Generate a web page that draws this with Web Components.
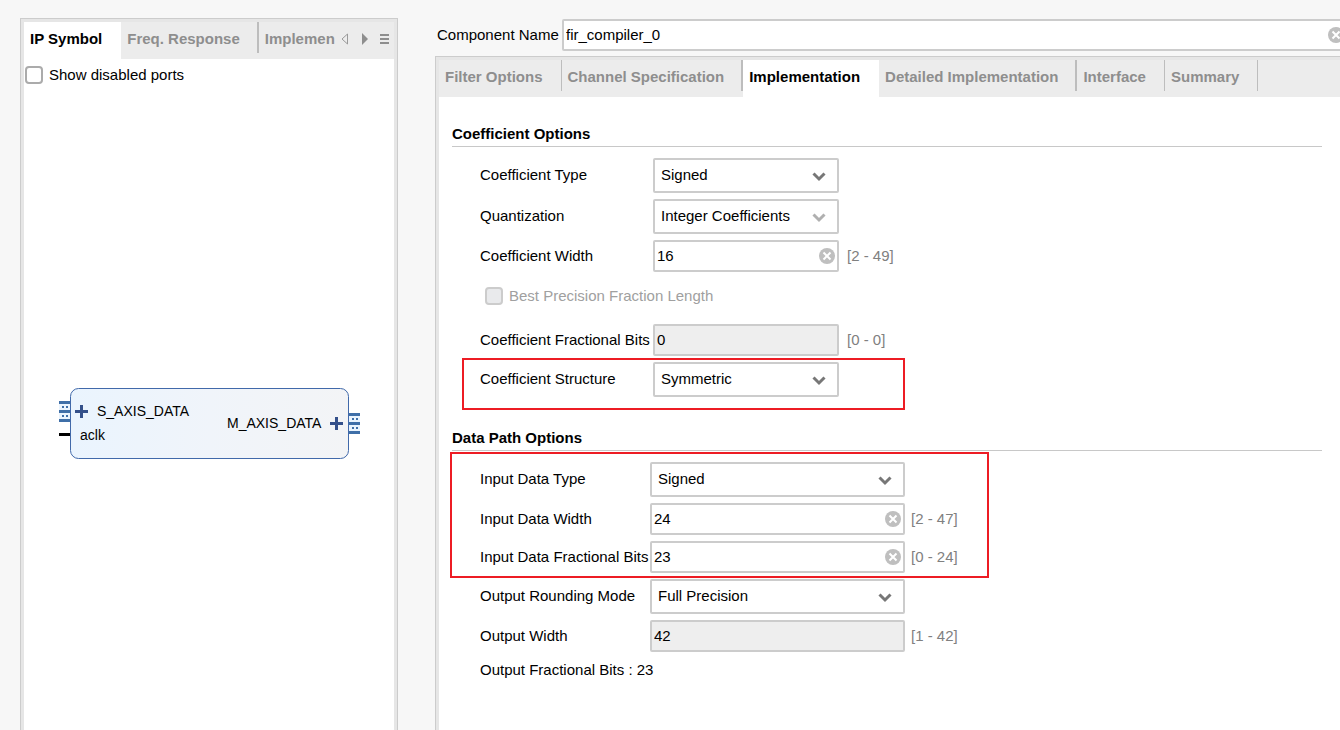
<!DOCTYPE html>
<html lang="en">
<head>
<meta charset="utf-8">
<title>FIR Compiler</title>
<style>
  html, body { height: 100%; }
  body {
    margin: 0;
    background: #f7f7f7;
    color: #000;
    font: 15px/20px "Liberation Sans", Arial, sans-serif;
  }
</style>
</head>
<body>
<fir-wizard></fir-wizard>

<template id="fir-wizard">
  <style>
    :host { display: flex; gap: 37px; min-height: 100vh; box-sizing: border-box; padding: 18px 0 0 20px; overflow: hidden; }
    .side { flex: 0 0 378px; min-width: 0; display: flex; }
    .side tab-panel { flex: 1; min-width: 0; }
    main { flex: 1; min-width: 0; margin-right: -8px; display: flex; flex-direction: column; gap: 5px; }
    main tab-panel { flex: 1; }
    .ports { padding: 6px 0 0 1px; }
    .canvas { padding: 303px 0 0 35px; }
    .form { padding: 27px 22px 24px 13px; display: grid; gap: 31px; }
    .coef { --label: 173px; --field: 186px; --hint-gap: 8px; }
    .data { --label: 170px; --field: 255px; --hint-gap: 6px; }
    .note { display: flex; align-items: center; height: 24px; }
  </style>
  <aside class="side">
    <tab-panel>
      <tab-item slot="tabs" active>IP Symbol</tab-item>
      <tab-item slot="tabs" thick>Freq. Response</tab-item>
      <tab-item slot="tabs" cut>Implemen</tab-item>
      <tab-scroller slot="tools"></tab-scroller>
      <div class="ports"><check-field label="Show disabled ports"></check-field></div>
      <div class="canvas"><ip-symbol></ip-symbol></div>
    </tab-panel>
  </aside>
  <main>
    <name-field label="Component Name" value="fir_compiler_0"></name-field>
    <tab-panel>
      <tab-item slot="tabs">Filter Options</tab-item>
      <tab-item slot="tabs" thick>Channel Specification</tab-item>
      <tab-item slot="tabs" active>Implementation</tab-item>
      <tab-item slot="tabs" thick>Detailed Implementation</tab-item>
      <tab-item slot="tabs">Interface</tab-item>
      <tab-item slot="tabs">Summary</tab-item>
      <div class="form">
        <option-group class="coef" heading="Coefficient Options">
          <select-field label="Coefficient Type" value="Signed"></select-field>
          <select-field label="Quantization" value="Integer Coefficients" dim></select-field>
          <text-field label="Coefficient Width" value="16" hint="[2 - 49]"></text-field>
          <check-field label="Best Precision Fraction Length" disabled inset></check-field>
          <text-field label="Coefficient Fractional Bits" value="0" hint="[0 - 0]" disabled></text-field>
          <marked-rows>
            <select-field label="Coefficient Structure" value="Symmetric"></select-field>
          </marked-rows>
        </option-group>
        <option-group class="data" heading="Data Path Options">
          <marked-rows wide>
            <select-field label="Input Data Type" value="Signed"></select-field>
            <text-field label="Input Data Width" value="24" hint="[2 - 47]"></text-field>
            <text-field label="Input Data Fractional Bits" value="23" hint="[0 - 24]"></text-field>
          </marked-rows>
          <select-field label="Output Rounding Mode" value="Full Precision"></select-field>
          <text-field label="Output Width" value="42" hint="[1 - 42]" disabled></text-field>
          <div class="note">Output Fractional Bits : 23</div>
        </option-group>
      </div>
    </tab-panel>
  </main>
</template>

<template id="tab-panel">
  <style>
    :host { display: flex; flex-direction: column; box-sizing: border-box; border: 1px solid #ccc; border-bottom: 0; padding: 3px 3px 0; background: #e6e6e6; }
    .strip { display: flex; height: 37px; background: #ececec; }
    .tabs { display: flex; flex: 1; min-width: 0; overflow: hidden; }
    .body { flex: 1; background: #fff; }
  </style>
  <div class="strip"><div class="tabs" role="tablist"><slot name="tabs"></slot></div><slot name="tools"></slot></div>
  <div class="body"><slot></slot></div>
</template>

<template id="tab-item">
  <style>
    :host { display: flex; flex: none; align-items: flex-start; }
    button { border: 0; margin: 0; height: 37px; padding: 0 18px 3px 6px; background: none; font: inherit; font-weight: bold; color: #8e8e8e; white-space: nowrap; }
    :host::after { content: ""; width: 1px; height: 31px; background: #bdbdbd; }
    :host([thick])::after { width: 2px; }
    :host([active]) { background: #fff; }
    :host([active])::after, :host([cut])::after { background: none; }
    :host([active]) button { color: #000; }
    :host([thick]) button { padding-right: 17px; }
    :host([cut]) button { padding-right: 0; }
  </style>
  <button type="button" role="tab"><slot></slot></button>
</template>

<template id="tab-scroller">
  <style>
    :host { display: flex; align-items: center; gap: 8px; padding: 0 4px 4px 0; }
    button { border: 0; padding: 0; width: 12px; height: 12px; background: none; display: block; }
    svg { display: block; }
  </style>
  <button type="button" aria-label="Scroll tabs left"><svg width="12" height="12"><path d="M9.5 1v10L4 6z" fill="none" stroke="#9a9a9a"/></svg></button>
  <button type="button" aria-label="Scroll tabs right"><svg width="12" height="12"><path d="M4 0v12l6-6z" fill="#8e8e8e"/></svg></button>
  <button type="button" aria-label="List tabs"><svg width="12" height="12"><path d="M2 1h9v2H2zM2 5h9v2H2zM2 9h9v2H2z" fill="#8e8e8e"/></svg></button>
</template>

<template id="name-field">
  <style>
    :host { display: flex; align-items: center; gap: 6px; padding: 1px 0 0 2px; }
    label { flex: none; width: 119px; white-space: nowrap; }
    .box { flex: 1; display: grid; align-items: center; }
    input { grid-area: 1/1; width: 100%; height: 32px; box-sizing: border-box; border: 2px solid #ccc; border-radius: 2px; padding: 0 24px 2px 2px; background: #fff; font: inherit; color: inherit; }
    clear-button { grid-area: 1/1; justify-self: end; margin-right: 4px; }
  </style>
  <label for="f"></label>
  <div class="box"><input id="f" type="text"><clear-button></clear-button></div>
</template>

<template id="clear-button">
  <style>
    :host { display: block; }
    button { display: block; border: 0; padding: 0; background: none; }
    svg { display: block; }
  </style>
  <button type="button" aria-label="Clear"><svg width="16" height="16"><circle cx="8" cy="8" r="8" fill="#bfbfbf"/><path d="M4.500 4.500l7 7M11.500 4.500l-7 7" stroke="#fff" stroke-width="2"/></svg></button>
</template>

<template id="text-field">
  <style>
    :host { display: grid; grid-template-columns: var(--label) var(--field) auto; align-items: center; justify-content: start; }
    label { white-space: nowrap; }
    input { grid-area: 1/2; width: 100%; height: 32px; box-sizing: border-box; border: 2px solid #ccc; border-radius: 2px; padding: 0 24px 2px 2px; background: #fff; font: inherit; color: #000; }
    input:disabled { background: #eee; }
    clear-button { grid-area: 1/2; justify-self: end; margin-right: 4px; }
    :host([disabled]) clear-button { display: none; }
    .hint { margin-left: var(--hint-gap); color: #808080; }
  </style>
  <label for="f"></label><input id="f" type="text"><clear-button></clear-button><span class="hint"></span>
</template>

<template id="select-field">
  <style>
    :host { display: grid; grid-template-columns: var(--label) var(--field); align-items: center; }
    select { appearance: none; grid-area: 1/2; width: 100%; height: 35px; box-sizing: border-box; border: 2px solid #ccc; border-radius: 2px; margin: 0; padding: 0 30px 2px 6px; background: #fff; font: inherit; color: #000; }
    label { padding-bottom: 2px; }
    svg { grid-area: 1/2; justify-self: end; margin-right: 12px; pointer-events: none; stroke: #777; }
    :host([dim]) svg { stroke: #b0b0b0; }
  </style>
  <label for="f"></label><select id="f"><option></option></select>
  <svg width="16" height="12" fill="none" stroke-width="3"><path d="M2.500 3.500L8 9l5.500-5.500"/></svg>
</template>

<template id="check-field">
  <style>
    :host { display: flex; align-items: center; gap: 6px; }
    :host([inset]) { box-sizing: border-box; height: 40px; padding: 0 0 4px 5px; }
    input { appearance: none; width: 18px; height: 18px; box-sizing: border-box; margin: 0; border: 2px solid #ababab; border-radius: 4px; background: #fff; }
    input:disabled { border-color: #ccc; background: #e9eaec; }
    :host([disabled]) label { color: #a0a0a0; }
  </style>
  <input id="f" type="checkbox"><label for="f"></label>
</template>

<template id="option-group">
  <style>
    :host { display: block; }
    h2 { margin: 0; padding-bottom: 2px; border-bottom: 1px solid #c8c8c8; font: inherit; font-weight: bold; }
    .rows { display: grid; gap: 6px; padding: 11px 0 0 28px; }
  </style>
  <h2></h2><div class="rows"><slot></slot></div>
</template>

<template id="marked-rows">
  <style>
    :host { display: grid; gap: 6px; position: relative; }
    .mark { position: absolute; box-sizing: border-box; border: 2px solid #ed1c24; pointer-events: none; left: -18px; top: -4px; bottom: -13px; width: 443px; }
    :host([wide]) .mark { left: -30px; top: -10px; bottom: -5px; width: 539px; }
  </style>
  <slot></slot><div class="mark"></div>
</template>

<template id="ip-symbol">
  <style>
    :host { display: block; }
    svg { display: block; font: 14px "Liberation Sans", Arial, sans-serif; }
  </style>
  <svg width="302" height="71" role="img" aria-label="IP block symbol">
    <defs>
      <linearGradient id="g"><stop offset="0" stop-color="#eaf4fe"/><stop offset=".5" stop-color="#f0f4fa"/><stop offset="1" stop-color="#f3f4f6"/></linearGradient>
      <g id="bus">
        <path d="M0 0h11v21H0z" fill="#eaf4fe"/>
        <path d="M0 0h11v3H0zM0 9h11v3H0zM0 18h11v3H0zM3 5h2v2H3zM7 5h2v2H7zM3 14h2v2H3zM7 14h2v2H7z" fill="#3f6fa8"/>
      </g>
    </defs>
    <rect x="11.500" y=".5" width="278" height="70" rx="8" fill="url(#g)" stroke="#4169aa"/>
    <use href="#bus" y="13"/>
    <use href="#bus" x="290" y="25"/>
    <path d="M0 45h11v3H0z"/>
    <path d="M16 22h13v3H16zM21 17h3v13h-3zM271 34h13v3h-13zM276 29h3v13h-3z" fill="#34508a"/>
    <text x="38" y="28">S_AXIS_DATA</text>
    <text x="21" y="52">aclk</text>
    <text x="168" y="40">M_AXIS_DATA</text>
  </svg>
</template>

<script>
  const define = (name, setup) => customElements.define(name, class extends HTMLElement {
    constructor() {
      super();
      this.attachShadow({ mode: "open" }).append(document.getElementById(name).content.cloneNode(true));
    }
    connectedCallback() { if (setup) setup(this, s => this.shadowRoot.querySelector(s)); }
  });

  const field = (host, $) => {
    $("label").textContent = host.getAttribute("label");
    const input = $("input");
    input.value = host.getAttribute("value") || "";
    input.disabled = host.hasAttribute("disabled");
    const clear = $("clear-button");
    if (clear) clear.addEventListener("click", () => { input.value = ""; input.focus(); });
  };

  define("clear-button");
  define("tab-scroller");
  define("ip-symbol");
  define("marked-rows");
  define("tab-panel");
  define("tab-item", (host, $) => $("button").setAttribute("aria-selected", host.hasAttribute("active")));
  define("name-field", field);
  define("text-field", (host, $) => { field(host, $); $(".hint").textContent = host.getAttribute("hint"); });
  define("check-field", (host, $) => {
    $("label").textContent = host.getAttribute("label");
    $("input").disabled = host.hasAttribute("disabled");
  });
  define("select-field", (host, $) => {
    $("label").textContent = host.getAttribute("label");
    $("option").textContent = host.getAttribute("value");
  });
  define("option-group", (host, $) => { $("h2").textContent = host.getAttribute("heading"); });
  define("fir-wizard");
</script>
</body>
</html>
